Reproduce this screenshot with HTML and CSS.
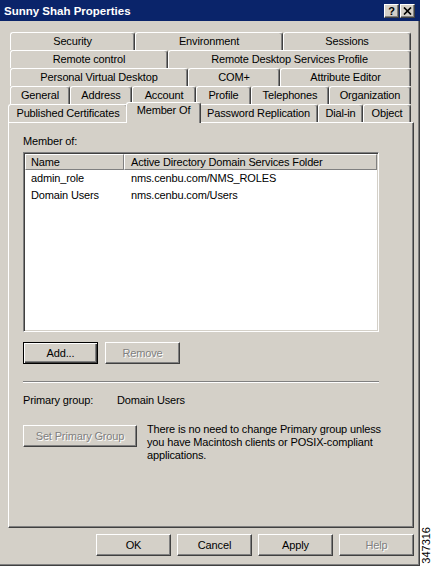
FILE: index.html
```html
<!DOCTYPE html>
<html>
<head>
<meta charset="utf-8">
<title>Sunny Shah Properties</title>
<link rel="stylesheet" href="styles.css">
</head>
<body>
<div class="page">
  <div class="window">
    <div class="titlebar">
      <span class="title">Sunny Shah Properties</span>
      <div class="caption-btns">
        <div class="cbtn help-btn">?</div>
        <div class="cbtn close-btn">
          <svg width="9" height="8" viewBox="0 0 9 8"><path d="M1 0.5 L8 7.5 M8 0.5 L1 7.5" stroke="#000" stroke-width="1.7" fill="none"/></svg>
        </div>
      </div>
    </div>

    <div class="tabs">
      <div class="tab-row">
        <div class="tab t-security">Security</div>
        <div class="tab t-environment">Environment</div>
        <div class="tab t-sessions">Sessions</div>
      </div>
      <div class="tab-row">
        <div class="tab t-remote">Remote control</div>
        <div class="tab t-rds">Remote Desktop Services Profile</div>
      </div>
      <div class="tab-row">
        <div class="tab t-pvd">Personal Virtual Desktop</div>
        <div class="tab t-com">COM+</div>
        <div class="tab t-attr">Attribute Editor</div>
      </div>
      <div class="tab-row">
        <div class="tab t-general">General</div>
        <div class="tab t-address">Address</div>
        <div class="tab t-account">Account</div>
        <div class="tab t-profile">Profile</div>
        <div class="tab t-tel">Telephones</div>
        <div class="tab t-org">Organization</div>
      </div>
      <div class="tab-row front">
        <div class="tab t-pub">Published Certificates</div>
        <div class="tab t-member selected">Member Of</div>
        <div class="tab t-pwd">Password Replication</div>
        <div class="tab t-dial">Dial-in</div>
        <div class="tab t-obj">Object</div>
      </div>
    </div>

    <div class="panel">
      <div class="member-label">Member of:</div>
      <div class="listview">
        <div class="lv-header">
          <div class="lv-col c1">Name</div>
          <div class="lv-col c2">Active Directory Domain Services Folder</div>
        </div>
        <div class="lv-row"><span class="cell c1">admin_role</span><span class="cell c2">nms.cenbu.com/NMS_ROLES</span></div>
        <div class="lv-row"><span class="cell c1">Domain Users</span><span class="cell c2">nms.cenbu.com/Users</span></div>
      </div>
      <div class="btn-row">
        <button class="btn default">Add...</button>
        <button class="btn disabled">Remove</button>
      </div>
      <div class="separator"></div>
      <div class="pg-row">
        <span class="pg-label">Primary group:</span>
        <span class="pg-value">Domain Users</span>
      </div>
      <div class="set-row">
        <button class="btn disabled wide">Set Primary Group</button>
        <p class="note">There is no need to change Primary group unless<br>you have Macintosh clients or POSIX-compliant<br>applications.</p>
      </div>
    </div>

    <div class="footer">
      <button class="btn">OK</button>
      <button class="btn">Cancel</button>
      <button class="btn">Apply</button>
      <button class="btn disabled">Help</button>
    </div>
  </div>
  <div class="side"><span class="figno">347316</span></div>
</div>
</body>
</html>
```

FILE: styles.css
```css
body {
  margin: 0;
  background: #ffffff;
  font-family: "Liberation Sans", Arial, sans-serif;
  font-size: 11px;
  letter-spacing: -0.15px;
  color: #000;
}

.page {
  display: flex;
  width: 432px;
  height: 567px;
}

.window {
  width: 420px;
  height: 566px;
  flex: none;
  background: #d4d0c8;
  display: flex;
  flex-direction: column;
  box-shadow: inset -1px -1px 0 #404040, inset -2px -2px 0 #808080;
}

.titlebar {
  height: 21px;
  flex: none;
  background: #0a246a;
  display: flex;
  align-items: center;
  justify-content: space-between;
  padding: 0 5px 0 4px;
}

.title {
  color: #fff;
  font-weight: bold;
  font-size: 11.5px;
  letter-spacing: 0;
}

.caption-btns {
  display: flex;
  gap: 1px;
}

.cbtn {
  width: 15px;
  height: 14px;
  box-sizing: border-box;
  background: #d4d0c8;
  border: 1px solid;
  border-color: #fff #404040 #404040 #fff;
  box-shadow: inset -1px -1px 0 #808080;
  display: flex;
  align-items: center;
  justify-content: center;
  font-weight: bold;
  font-size: 11px;
  line-height: 12px;
}

.tabs {
  padding-top: 11px;
}

.tab-row {
  display: flex;
  align-items: flex-start;
  height: 18px;
  margin-left: 10px;
}

.tab-row.front {
  margin-left: 8px;
}

.tab {
  flex: none;
  box-sizing: border-box;
  height: 18px;
  background: #d4d0c8;
  border-top: 1px solid #fff;
  border-left: 1px solid #fff;
  border-right: 1px solid #404040;
  box-shadow: inset -1px 0 0 #808080;
  border-radius: 3px 3px 0 0;
  text-align: center;
  line-height: 16px;
  white-space: nowrap;
}

.tab.selected {
  height: 21px;
  margin: -2px -2px 0 -2px;
  line-height: 14px;
  position: relative;
  z-index: 2;
}

.t-security { width: 125px; }
.t-environment { width: 148px; }
.t-sessions { width: 128px; }
.t-remote { width: 158px; }
.t-rds { width: 243px; }
.t-pvd { width: 178px; }
.t-com { width: 92px; }
.t-attr { width: 131px; }
.t-general { width: 60px; }
.t-address { width: 62px; }
.t-account { width: 64px; }
.t-profile { width: 55px; }
.t-tel { width: 78px; }
.t-org { width: 82px; }
.t-pub { width: 120px; }
.t-member { width: 75px; }
.t-pwd { width: 119px; }
.t-dial { width: 45px; }
.t-obj { width: 48px; }

.panel {
  margin-left: 8px;
  width: 406px;
  height: 406px;
  flex: none;
  box-sizing: border-box;
  border-top: 1px solid #fff;
  border-left: 1px solid #fff;
  border-right: 1px solid #404040;
  border-bottom: 1px solid #404040;
  box-shadow: inset -1px -1px 0 #808080;
  padding: 11px 0 0 14px;
}

.member-label {
  height: 14px;
  line-height: 14px;
  margin-bottom: 4px;
}

.listview {
  width: 356px;
  height: 180px;
  box-sizing: border-box;
  background: #fff;
  border: 1px solid;
  border-color: #808080 #fff #fff #808080;
  box-shadow: inset 1px 1px 0 #404040, inset -1px -1px 0 #d4d0c8;
  padding: 1px;
}

.lv-header {
  display: flex;
  height: 16px;
  background: #d4d0c8;
}

.lv-col {
  box-sizing: border-box;
  height: 16px;
  border: 1px solid;
  border-color: #fff #808080 #808080 #fff;
  line-height: 14px;
  white-space: nowrap;
}

.lv-col.c1 {
  width: 99px;
  flex: none;
  padding-left: 5px;
}

.lv-col.c2 {
  flex: 1;
  padding-left: 6px;
}

.lv-row {
  display: flex;
  height: 17px;
  line-height: 17px;
}

.cell.c1 {
  width: 99px;
  flex: none;
  padding-left: 6px;
  box-sizing: border-box;
}

.cell.c2 {
  padding-left: 7px;
}

.btn-row {
  display: flex;
  gap: 7px;
  margin-top: 10px;
}

.btn {
  width: 75px;
  height: 22px;
  box-sizing: border-box;
  background: #d4d0c8;
  border: 1px solid;
  border-color: #fff #404040 #404040 #fff;
  box-shadow: inset -1px -1px 0 #808080;
  font: inherit;
  letter-spacing: inherit;
  color: #000;
  padding: 0;
  margin: 0;
}

.btn.default {
  border: 1px solid #000;
  box-shadow: inset 1px 1px 0 #fff, inset -1px -1px 0 #404040, inset -2px -2px 0 #808080;
}

.btn.disabled {
  color: #808080;
  text-shadow: 1px 1px 0 #fff;
}

.btn.wide {
  width: 114px;
  flex: none;
}

.separator {
  width: 356px;
  margin-top: 17px;
  border-top: 1px solid #808080;
  border-bottom: 1px solid #fff;
}

.pg-row {
  display: flex;
  margin-top: 10px;
  line-height: 14px;
}

.pg-label {
  width: 94px;
}

.set-row {
  display: flex;
  align-items: flex-start;
  margin-top: 18px;
}

.note {
  margin: -2px 0 0 10px;
  line-height: 13px;
}

.footer {
  display: flex;
  justify-content: flex-end;
  gap: 6px;
  margin-top: 6px;
  padding-right: 6px;
}

.side {
  flex: 1;
  display: flex;
  align-items: flex-end;
  justify-content: center;
  padding-bottom: 3px;
}

.figno {
  writing-mode: vertical-rl;
  transform: rotate(180deg);
  font-size: 11px;
  line-height: 11px;
  letter-spacing: 0;
}
```
